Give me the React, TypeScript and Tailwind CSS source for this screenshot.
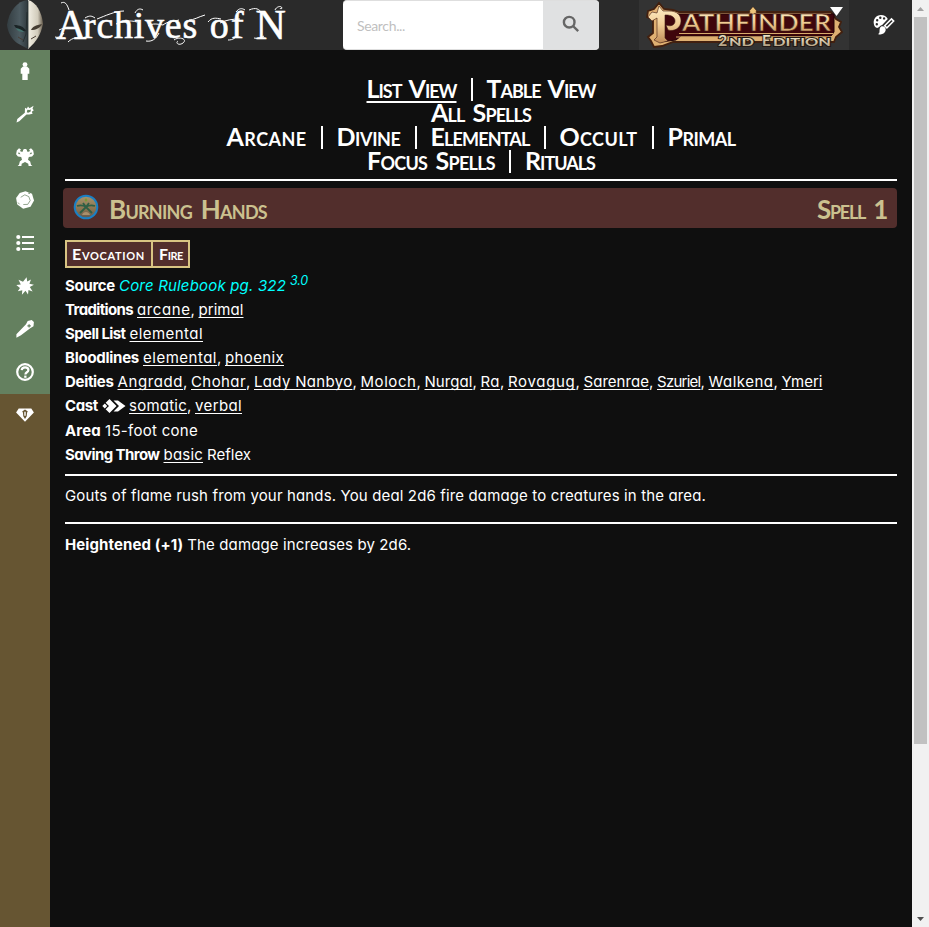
import { useLayoutEffect, useRef } from "react";
import type { ReactNode } from "react";

/* A run of text tracked so that it occupies exactly `w` pixels. */
function Fit({ t, w, className = "" }: { t: string; w: number; className?: string }) {
  const ref = useRef<HTMLSpanElement>(null);
  useLayoutEffect(() => {
    const el = ref.current;
    if (!el) return;
    el.style.letterSpacing = "0px";
    const natural = el.getBoundingClientRect().width;
    el.style.letterSpacing = `${(w - natural) / t.length}px`;
  }, [t, w]);
  return (
    <span ref={ref} className={`inline-block shrink-0 whitespace-pre ${className}`}>
      {t}
    </span>
  );
}

const BODY = "font-['Inter','Open_Sans',sans-serif] text-[15px] [font-feature-settings:'cv11'] font-normal";
const CAPS = "font-['Lato',sans-serif] font-bold [font-variant-caps:small-caps] [word-spacing:3px]";

function Line({ children, className = "" }: { children: ReactNode; className?: string }) {
  return <div className={`flex h-6 items-center leading-6 ${className}`}>{children}</div>;
}
const B = ({ t, w }: { t: string; w: number }) => <Fit t={t} w={w} className="mr-1 font-bold" />;
const A = ({ t, w }: { t: string; w: number }) => (
  <Fit t={t} w={w} className="underline decoration-1 underline-offset-2 [text-decoration-skip-ink:none]" />
);
const Comma = () => <span className="w-2 shrink-0">,</span>;
const Bar = () => <span className="mx-[14px] h-[23px] w-[2px] shrink-0 translate-y-[1px] bg-white" />;

const deities: [string, number][] = [
  ["Angradd", 65.5], ["Chohar", 55], ["Lady Nanbyo", 98.5], ["Moloch", 56], ["Nurgal", 48], ["Ra", 19.5],
  ["Rovagug", 67.5], ["Sarenrae", 65.5], ["Szuriel", 43.5], ["Walkena", 65], ["Ymeri", 41],
];

const icons: ReactNode[] = [
  <g key="p"><circle cx="9" cy="2.6" r="2.4" /><path d="M7 4.4h4l2.3 2.4v5h-1.6V18H6.3v-6.2H4.7v-5z" /></g>,
  <path key="w" fillRule="evenodd" d="M.5 17.5 1.3 14l7.5-6.2L9 2.8l1.8 1L12 1.5l1.5 1.7L17.6.8l-1.1 3 1.3 1.4-2 1.5.8 2-3.4.8-2.7-.1-7.2 6.8zM11.4 4.8l-.6 2.5 1.3.5 2.4-1.1.4-2.2-1.5.5z" />,
  <path key="m" fillRule="evenodd" d="M7 3.4C6.8 1.2 7.7.9 9 .9s2.2.3 2 2.5l2 .4 1-1.1-1-1.3L15 .3l2.2 2.1.7 3.8-1.8 2.3-3.3.6-.8 2.6 2.2 1.8.8 3.2 1.4 1.2h-3.8l-.3-2.2L9 14.1l-3.3 1.6-.3 2.2H1.6L3 16.7l.8-3.2L6 11.7l-.8-2.6-3.3-.6L.1 6.2l.7-3.8L3 .3l2 1.1-1 1.3 1 1.1zM2.8 4l-.6 1.9 2.3.3zM15.2 4l-1.7 2.2 2.3-.3z" />,
  <g key="d"><path d="m9.5.2 6.5 2.5 2 6.8-3.5 6.2-7.3 2.1L1.3 13.6.1 7.1l3.6-5z" /><path d="m4.7 6.3 4.1-2.5 4 1.8M12.8 5.6l1.4 4-2.5 3.8-4.4.1" fill="none" stroke="#64805f" strokeWidth=".7" /><path d="m2 11.5 1.5 1.8M12 2l2 .7" stroke="#64805f" strokeWidth=".7" /></g>,
  <g key="l"><circle cx="2.3" cy="3" r="2.1" /><circle cx="2.3" cy="9" r="2.1" /><circle cx="2.3" cy="15" r="2.1" /><path d="M6 2h12v2H6zM6 8h12v2H6zM6 14h12v2H6z" /></g>,
  <path key="s" d="m10.6.3.6 4.2 3.8-2-1.6 4.2 4.5 1-4.1 2.4 2.8 4.3-4.1-1.5-.5 4.6-2.5-3.7-3.6 4 .4-4.5-4.5 1L4 11 .3 7.9l4.5-.5L2.5 2.8 7 4.7z" />,
  <path key="k" fillRule="evenodd" d="M.4 17.8V14.3L10 4.2 11.7 1 15.7.1l2.2 2-.4 4.2-3.3 1.9L5 15.3zM12.5 4.2v1.1h-1.1v1.2h1.1v1.1h1.2V6.5h1.1V5.3h-1.1V4.2z" />,
  <g key="q"><circle cx="9" cy="9" r="7.8" fill="none" stroke="white" strokeWidth="2.2" /><path d="M5.7 7.2C6 3.3 12.4 3.6 12.4 7c0 2.3-3 2.2-3 4.4" fill="none" stroke="white" strokeWidth="2.2" /><path d="M8.2 12.6h2.3v2.2H8.2z" /></g>,
  <path key="g" fillRule="evenodd" d="M2.7 2.6h12.6l2.6 3.8L9 15.8.1 6.4zM9 3.6 6.2 5.4l.7 1.2.4 3.6L9 13l1.7-2.8.4-3.6.7-1.2zm-.7 2.2h1.4v4H8.3z" />,
];

function Sidebar() {
  return (
    <nav className="flex w-[50px] shrink-0 flex-col bg-[#665532]">
      {icons.map((icon, i) => (
        <div key={i} className={`flex h-[43px] items-center justify-center pb-[1px] ${i < 8 ? "bg-[#64805f]" : ""}`}>
          <svg width="18" height="18" viewBox="0 0 18 18" fill="white">{icon}</svg>
        </div>
      ))}
    </nav>
  );
}

function Mask() {
  return (
    <svg width="38" height="50" viewBox="0 0 38 50" className="shrink-0">
      <defs>
        <linearGradient id="ml"><stop stopColor="#333d41" /><stop offset=".6" stopColor="#4c5a60" /><stop offset="1" stopColor="#30393d" /></linearGradient>
        <linearGradient id="mr"><stop stopColor="#f2efe4" /><stop offset=".65" stopColor="#d1cbbb" /><stop offset="1" stopColor="#665c4d" /></linearGradient>
      </defs>
      <path d="M22 0C11 1 3 11 1 25c1 8 5 14 10 18l11 6z" fill="url(#ml)" />
      <path d="M22 0c8 2 14 12 15 24-2 10-6 17-15 25z" fill="url(#mr)" />
      <path d="M8 25c6 0 10 2 12 6-6 1-10-2-12-6z" fill="#1b2426" /><path d="M10 28c4 1 7 2 8 4-4 0-7-1-8-4z" fill="#46736f" />
      <path d="M36 24c-6 1-10 3-11 6 5 0 9-2 11-6z" fill="#443c32" />
      <path d="m21 12-1 22-3 8M22 1v47" fill="none" stroke="#20282a" strokeWidth=".8" />
      <path d="m12 37 5 3M30 36l-5 3" stroke="#493e35" />
    </svg>
  );
}

function Wordmark() {
  return (
    <div className="relative h-[50px] w-[240px] font-['Liberation_Serif',serif] text-white [-webkit-text-stroke:0.6px_white]">
      <div className="flex h-[50px] items-center pl-[6px] pt-[1px]">
        <Fit t="A" w={27} className="text-[42px]" />
        <Fit t="rchives" w={115} className="text-[38px]" />
        <Fit t=" of" w={48} className="text-[38px]" />
        <Fit t=" N" w={39} className="text-[42px]" />
      </div>
      <svg className="absolute left-0 top-0" width="240" height="50" viewBox="0 0 240 50" fill="none" stroke="white" strokeWidth="1">
        <path d="M11 3c4-2 6 1 8 7M5 37c4 1 7-1 9-4M9 30c6-3 14-3 20-1M18 42c5-5 9-4 13-5M35 18c5-3 7-2 10 0M47 19c8-3 18-8 27-8M85 13c2-4 5-5 8-3M66 24c7-3 14-4 21-2M98 26c5-3 9-2 15-1M113 25c5-4 9-3 16-5M96 41c6 1 10-2 13-8M124 40c5-4 14-1 9 3-4 3-8 0-5-2M139 20c5 0 9-3 16-5M158 22c4-5 8-4 13-3M170 23c6-3 12-4 20-4M178 40c5 0 8-2 9-6M186 12c3-4 6-4 9-2M199 10c7-3 10-1 13 3M204 38c4 1 7 0 10-2M225 10c1-3 6-5 7-2 0 1-2 1-2 0" />
      </svg>
    </div>
  );
}

function Pathfinder() {
  return (
    <svg width="210" height="50" viewBox="0 0 210 50">
      <defs>
        <linearGradient id="gold" x2="0" y2="1"><stop stopColor="#fff0c8" /><stop offset=".5" stopColor="#f0cc94" /><stop offset="1" stopColor="#c08c58" /></linearGradient>
        <linearGradient id="silver" x2="0" y2="1"><stop stopColor="#fffbe5" /><stop offset="1" stopColor="#a79170" /></linearGradient>
      </defs>
      <path d="M9 11 15 9l5-6 5 6 9 1 6 2h70l4-4 4 4h74l5 7 5 3-2 5 3 5-6 5-2 5H42l-8 0-11 4-8 1-3-6-3-4 5-4V20l-6-3z" fill="#dfb072" stroke="#42200f" strokeWidth="1.8" />
      <path d="M15 14h180v18l-3 4H42l-5 4-16 2V18z" fill="#3f060c" stroke="#220309" strokeWidth="1" />
      <path d="M40 33.500h154M37 37h157" stroke="#d8ac6b" />
      <g fill="url(#gold)" stroke="#401b12" strokeWidth=".6">
        <path d="m20 6 4 5h6c8 0 12 4 12 10 0 7-7 11-13 9l-2-5c5 2 9 0 9-4s-4-6-9-6h-1v23l3 3-8 2-6-3 3-3V18l-5 3-4-4 4-5 5 1z" />
        <text x="43" y="31" fontFamily="Lato, sans-serif" fontWeight="700" fontSize="22.500" textLength="149" lengthAdjust="spacingAndGlyphs">ATHFINDER</text>
      </g>
      <path d="m114 7 3.500 4-3.500 3-3.500-3z" fill="#edc47b" />
      <g fontFamily="Lato, sans-serif" fontWeight="700" fill="url(#silver)" stroke="#241914" strokeWidth="2" paintOrder="stroke">
        <text x="79" y="46" fontSize="16">2</text><text x="90" y="46" fontSize="12" textLength="25" lengthAdjust="spacingAndGlyphs">ND</text>
        <text x="123" y="46" fontSize="15">E</text><text x="134" y="46" fontSize="12" textLength="58" lengthAdjust="spacingAndGlyphs">DITION</text>
      </g>
      <path d="M191 7h13l-6.500 9z" fill="white" />
    </svg>
  );
}

function Header() {
  return (
    <header className="flex h-[50px] shrink-0 bg-[#2a2a2a]">
      <div className="flex w-[343px] pl-[6px]"><Mask /><div className="ml-[6px]"><Wordmark /></div></div>
      <div className="flex w-64 overflow-hidden rounded border-y border-[#dedede] bg-white font-['Lato',sans-serif] text-[14px] text-[#bfbfbf]">
        <div className="flex w-[200px] items-center pl-[14px]"><Fit t="Search..." w={48} /></div>
        <div className="flex flex-1 items-center justify-center bg-[#e0e1e2]">
          <svg width="18" height="18" viewBox="0 0 18 18" fill="none" stroke="#666" strokeWidth="2.4" className="-mt-[2px]"><circle cx="7.2" cy="7.2" r="5.3" /><path d="m11 11 5.2 5.2" /></svg>
        </div>
      </div>
      <div className="ml-10 w-[210px] bg-[#333]"><Pathfinder /></div>
      <div className="flex flex-1 items-center justify-center pl-[7px]">
        <svg width="22" height="22" viewBox="0 0 22 22" fill="white">
          <path fillRule="evenodd" d="M8 1C3 1 .5 5 .7 9c.2 3.300 2 5.300 4.200 4.800 2-.5 2.100-2.500 4.300-2.700l5.600-6C13.500 2 11 1 8 1zM4.200 5a1.200 1.200 0 1 1 0 2.400A1.200 1.200 0 0 1 4.200 5zm3.100-2.500a1.200 1.200 0 1 1 0 2.400 1.200 1.200 0 0 1 0-2.400zm3.800.7a1.200 1.200 0 1 1 0 2.400 1.200 1.200 0 0 1 0-2.400zM3.800 9a1.200 1.200 0 1 1 0 2.400 1.200 1.200 0 0 1 0-2.400z" />
          <path d="m11.700 11.700 6.800-6.800 2.200 2.200-6.800 6.800z" fill="none" stroke="white" strokeWidth="1.500" />
          <path d="M8.700 12.300c2.500-.4 4.400 1.500 4 4-.4 3-4.300 5.200-7.800 3.600 2.200-.9 1.400-2.300 1.700-4.500.2-1.400.8-2.600 2.100-3.100z" />
        </svg>
      </div>
    </header>
  );
}

function Orb() {
  return (
    <svg width="26" height="26" viewBox="0 0 26 26" className="-mt-[3px]">
      <defs><linearGradient id="orb" x2="0" y2="1"><stop stopColor="#a8946c" /><stop offset=".6" stopColor="#8a7450" /><stop offset="1" stopColor="#5f5850" /></linearGradient></defs>
      <circle cx="13" cy="13" r="11.300" fill="url(#orb)" stroke="#1a80c4" strokeWidth="2" />
      <path d="M4 12c3-1 6-1 9 1 3-2 6-2 9-1M7 19l6-6 6 6M10 9l3 4 3-4" fill="none" stroke="#2f5f45" strokeWidth="1.800" />
      <path d="M9 21c1-4 7-4 8 0z" fill="#a98f6c" />
      <path d="m13 4 1.500 2L13 8l-1.500-2z" fill="#7b9a35" />
    </svg>
  );
}

const Rule = ({ className = "" }: { className?: string }) => <div className={`h-[2px] bg-white ${className}`} />;

export default function App() {
  return (
    <div className={`flex h-[927px] w-[929px] overflow-hidden bg-[#0f0f0f] text-white ${BODY}`}>
      <div className="flex w-[912px] flex-col">
        <Header />
        <div className="flex flex-1">
          <Sidebar />
          <main className="flex-1 pl-[15px] pr-[15px] pt-[26px]">
            <div className={`text-[25px] ${CAPS}`}>
              <Line className="justify-center">
                <Fit t="List View" w={90} className="underline decoration-2 underline-offset-[3px]" /><Bar /><Fit t="Table View" w={109} />
              </Line>
              <Line className="justify-center"><Fit t="All Spells" w={100} /></Line>
              <Line className="justify-center">
                <Fit t="Arcane" w={80} /><Bar /><Fit t="Divine" w={64} /><Bar /><Fit t="Elemental" w={99} /><Bar /><Fit t="Occult" w={78} /><Bar /><Fit t="Primal" w={68} />
              </Line>
              <Line className="justify-center"><Fit t="Focus Spells" w={128} /><Bar /><Fit t="Rituals" w={70} /></Line>
            </div>
            <Rule className="mt-[7px]" />
            <div className={`-ml-[2px] mt-[7px] flex h-10 items-center rounded bg-[#522e2c] pl-[10px] pr-[10px] text-[26px] text-[#cbc18f] ${CAPS}`}>
              <Orb />
              <Fit t="Burning Hands" w={158} className="ml-[10px] translate-y-[1px]" />
              <Fit t="Spell 1" w={70} className="ml-auto translate-y-[1px]" />
            </div>
            <div className={`mt-3 flex h-7 text-[16px] leading-6 ${CAPS}`}>
              <div className="flex items-center border-2 border-[#d8c483] bg-[#522e2c] pl-[5px] pr-[6px]"><Fit t="Evocation" w={73} /></div>
              <div className="-ml-[2px] flex items-center border-2 border-[#d8c483] bg-[#522e2c] pl-[6px] pr-[5px]"><Fit t="Fire" w={24} /></div>
            </div>
            <div className="mt-[6px]">
              <Line><B t="Source" w={50} /><Fit t="Core Rulebook pg. 322" w={167} className="italic text-[#00ffff]" /><Fit t="3.0" w={18} className="ml-1 -translate-y-[5px] text-[12.500px] italic text-[#00ffff]" /></Line>
              <Line><B t="Traditions" w={68} /><A t="arcane" w={53.5} /><Comma /><A t="primal" w={45} /></Line>
              <Line><B t="Spell List" w={60.5} /><A t="elemental" w={73.5} /></Line>
              <Line><B t="Bloodlines" w={74} /><A t="elemental" w={74} /><Comma /><A t="phoenix" w={59} /></Line>
              <Line>
                <B t="Deities" w={48.5} />
                {deities.map(([name, w], i) => <span key={name} className="flex"><A t={name} w={w} />{i < 10 && <Comma />}</span>)}
              </Line>
              <Line>
                <B t="Cast" w={33} />
                <svg className="mr-[3px] shrink-0" width="24" height="14" viewBox="0 0 24 14" fill="white"><path d="m2.800 4.600 2.400 2.400-2.400 2.400L.3 7zM3.600 3.800 7.500 0l7 7-7 7-3.900-3.800L7 7zM11.500 1.500h4.500L23.500 7 16 12.500h-4.500L17 7z" /></svg>
                <A t="somatic" w={58} /><Comma /><A t="verbal" w={47} />
              </Line>
              <Line className="mt-[1px]"><B t="Area" w={36} /><Fit t="15-foot cone" w={93} /></Line>
              <Line><B t="Saving Throw" w={94.5} /><A t="basic" w={39.5} /><Fit t="Reflex" w={44} className="ml-1" /></Line>
            </div>
            <Rule className="mt-[7px]" />
            <Line className="mt-2"><Fit t="Gouts of flame rush from your hands. You deal 2d6 fire damage to creatures in the area." w={641} /></Line>
            <Rule className="mt-[14px]" />
            <Line className="mt-[9px]"><B t="Heightened (+1)" w={118} /><Fit t="The damage increases by 2d6." w={224} /></Line>
          </main>
        </div>
      </div>
      <div className="flex w-[17px] flex-col items-center bg-[#f1f1f1]">
        <div className="flex h-[17px] items-center"><svg width="7" height="4" viewBox="0 0 7 4" fill="#a3a3a3"><path d="M3.500 0 7 4H0z" /></svg></div>
        <div className="h-[727px] w-[13px] bg-[#c1c1c1]" />
        <div className="mt-auto flex h-[17px] items-center"><svg width="7" height="4" viewBox="0 0 7 4" fill="#505050"><path d="M3.500 4 7 0H0z" /></svg></div>
      </div>
    </div>
  );
}
